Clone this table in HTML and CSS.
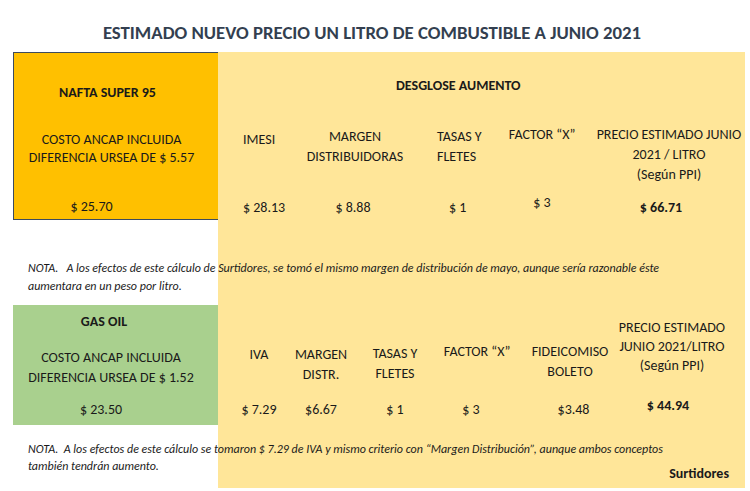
FILE: index.html
```html
<!DOCTYPE html>
<html lang="es">
<head>
<meta charset="utf-8">
<title>Estimado nuevo precio combustible</title>
<link rel="stylesheet" href="styles.css">
</head>
<body>
<div class="page">
  <h1 class="title">ESTIMADO NUEVO PRECIO UN LITRO DE COMBUSTIBLE A JUNIO 2021</h1>
  <div class="sheet">
    <div class="backdrop"></div>

    <section class="fuel fuel-nafta">
      <div class="fuel-name nafta-name">NAFTA SUPER 95</div>
      <div class="fuel-cost">COSTO ANCAP INCLUIDA<br>DIFERENCIA URSEA DE $ 5.57</div>
      <div class="fuel-value nafta-value">$ 25.70</div>
    </section>

    <section class="breakdown breakdown-nafta">
      <div class="breakdown-title">DESGLOSE AUMENTO</div>
      <div class="grid-nafta">
        <div class="hd n1">IMESI</div>
        <div class="hd n2">MARGEN<br>DISTRIBUIDORAS</div>
        <div class="hd n3">TASAS Y<br>FLETES</div>
        <div class="hd n4">FACTOR “X”</div>
        <div class="hd n5">PRECIO ESTIMADO JUNIO<br>2021 / LITRO<br>(Según PPI)</div>
        <div class="val nv1">$ 28.13</div>
        <div class="val nv2">$ 8.88</div>
        <div class="val nv3">$ 1</div>
        <div class="val nv4">$ 3</div>
        <div class="val total nv5">$ 66.71</div>
      </div>
    </section>

    <p class="note note-one">NOTA.&nbsp;&nbsp; A los efectos de este cálculo de Surtidores, se tomó el mismo margen de distribución de mayo, aunque sería razonable éste aumentara en un peso por litro.</p>

    <section class="fuel fuel-gas">
      <div class="fuel-name gas-name">GAS OIL</div>
      <div class="fuel-cost">COSTO ANCAP INCLUIDA<br>DIFERENCIA URSEA DE $ 1.52</div>
      <div class="fuel-value gas-value">$ 23.50</div>
    </section>

    <section class="breakdown breakdown-gas">
      <div class="grid-gas">
        <div class="hd g1">IVA</div>
        <div class="hd g2">MARGEN<br>DISTR.</div>
        <div class="hd g3">TASAS Y<br>FLETES</div>
        <div class="hd g4">FACTOR “X”</div>
        <div class="hd g5">FIDEICOMISO<br>BOLETO</div>
        <div class="hd g6">PRECIO ESTIMADO<br>JUNIO 2021/LITRO<br>(Según PPI)</div>
        <div class="val gv1">$ 7.29</div>
        <div class="val gv2">$6.67</div>
        <div class="val gv3">$ 1</div>
        <div class="val gv4">$ 3</div>
        <div class="val gv5">$3.48</div>
        <div class="val total gv6">$ 44.94</div>
      </div>
    </section>

    <p class="note note-two">NOTA.&nbsp; A los efectos de este cálculo se tomaron $ 7.29 de IVA y mismo criterio con “Margen Distribución”, aunque ambos conceptos también tendrán aumento.</p>
    <div class="source">Surtidores</div>
  </div>
</div>
</body>
</html>
```

FILE: styles.css
```css
* { box-sizing: border-box; }

html, body {
  margin: 0;
  padding: 0;
  background: #ffffff;
}

body {
  font-family: "Carlito", "Lato", "Liberation Sans", sans-serif;
  color: #1a1a1a;
  width: 750px;
  height: 491px;
  overflow: hidden;
}

.title {
  margin: 0;
  height: 52px;
  display: flex;
  align-items: center;
  justify-content: center;
  padding: 12px 6px 0 0;
  font-size: 18.8px;
  font-weight: 700;
  color: #333f50;
  white-space: nowrap;
}

.sheet {
  display: grid;
  margin-left: 13px;
  width: 732px;
  grid-template-columns: 205px 527px;
  grid-template-rows: 168px 85px 120px 63px;
}

.backdrop {
  grid-column: 2;
  grid-row: 1 / -1;
  background: #ffe699;
}

/* left fuel boxes */
.fuel {
  grid-column: 1;
  display: flex;
  flex-direction: column;
  font-size: 14px;
  text-align: center;
  white-space: nowrap;
}

.fuel-nafta {
  grid-row: 1;
  background: #ffc000;
  border-top: 1px solid #3d4b5e;
  border-left: 1px solid #3d4b5e;
  border-bottom: 1px solid #3d4b5e;
  padding-top: 31px;
}

.fuel-gas {
  grid-row: 3;
  background: #a9d08e;
  padding-top: 8px;
}

.fuel-name {
  font-weight: 700;
  line-height: 18px;
}

.fuel-cost {
  line-height: 18px;
  padding-right: 9px;
}

.fuel-value {
  line-height: 18px;
}

.nafta-name { padding-right: 17px; }
.fuel-nafta .fuel-cost { margin-top: 29px; }
.nafta-value { margin-top: 31px; padding-right: 49px; }

.gas-name { padding-right: 23px; }
.fuel-gas .fuel-cost { margin-top: 17px; line-height: 20px; }
.gas-value { margin-top: 13px; padding-right: 29px; }

/* breakdown areas */
.breakdown {
  grid-column: 2;
  font-size: 14px;
  white-space: nowrap;
}

.breakdown-nafta {
  grid-row: 1;
  padding-top: 25px;
}

.breakdown-gas {
  grid-row: 3;
}

.breakdown-title {
  font-weight: 700;
  line-height: 18px;
  padding-left: 178px;
}

.hd {
  line-height: 20px;
  align-self: start;
}

.val {
  line-height: 20px;
  align-self: start;
}

.total { font-weight: 700; }

.grid-nafta {
  display: grid;
  padding-left: 25px;
  grid-template-columns: 54px 116px 84px 90px 157px;
  grid-template-rows: 103px 20px;
}

.n1 { margin-top: 35px; }
.n2 { margin-top: 32px; text-align: center; }
.n3 { margin-top: 32px; padding-left: 24px; }
.n4 { margin-top: 30px; text-align: center; }
.n5 { margin-top: 30px; text-align: center; padding-left: 7px; }

.nv2 { text-align: center; padding-right: 4px; }
.nv3 { padding-left: 36px; }
.nv4 { text-align: center; margin-top: -5px; }
.nv5 { text-align: center; padding-right: 9px; }

.grid-gas {
  display: grid;
  padding-left: 15px;
  grid-template-columns: 52px 72px 76px 88px 91px 120px;
  grid-template-rows: 95px 20px;
  text-align: center;
}

.g1 { margin-top: 40px; }
.g2 { margin-top: 40px; }
.g3 { margin-top: 39px; }
.g4 { margin-top: 37px; }
.g5 { margin-top: 37px; padding-left: 7px; }
.g6 { margin-top: 13px; line-height: 19px; }

.gv4 { padding-right: 12px; }
.gv5 { padding-left: 14px; }
.gv6 { margin-top: -4px; padding-right: 8px; }

/* notes */
.note {
  grid-column: 1 / -1;
  margin: 0;
  font-style: italic;
  font-size: 12px;
  padding-left: 15px;
  padding-right: 40px;
}

.note-one {
  grid-row: 2;
  padding-top: 39px;
  line-height: 18px;
}

.note-two {
  grid-row: 4;
  padding-top: 16px;
  line-height: 17px;
}

.source {
  grid-column: 2;
  grid-row: 4;
  justify-self: end;
  align-self: end;
  margin: 0 16px 5px 0;
  font-size: 14px;
  font-weight: 700;
  line-height: 18px;
}
```
